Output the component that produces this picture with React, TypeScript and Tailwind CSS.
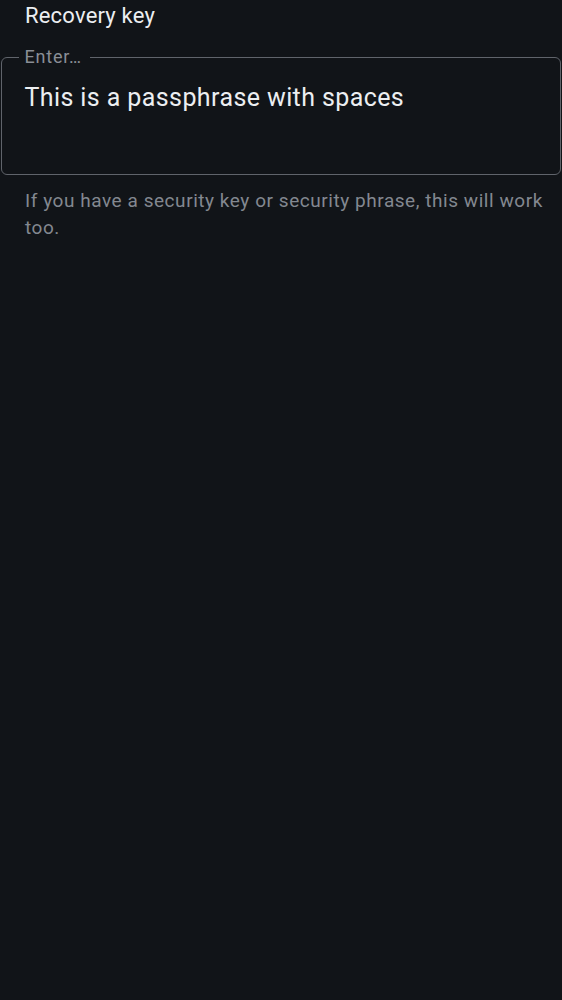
import React from "react";

export default function App() {
  return (
    <div
      className="min-h-[1000px] w-full bg-[#111418] text-[#e6e8eb]"
      style={{ fontFamily: "Roboto, 'Noto Sans', sans-serif" }}
    >
      <div className="pl-[25px] pt-[1px] text-[22px] leading-[30px] tracking-[0.2px] text-[#eceef1]">
        Recovery key
      </div>
      <fieldset className="mx-[1px] mt-[15px] h-[129px] rounded-[6px] border-[1.5px] border-[#60646b] pl-[16.5px] pr-[16px] pb-0 pt-0">
        <legend className="pl-[6px] pr-[8px] text-[18px] leading-[22px] tracking-[0.8px] text-[#8a8e96]">
          Enter…
        </legend>
        <div className="pl-[6px] pt-[14px] text-[25px] leading-[32px] tracking-[0.4px] text-[#eceef1]">
          This is a passphrase with spaces
        </div>
      </fieldset>
      <p className="pl-[25px] pr-[12px] pt-[12px] text-[19px] leading-[27px] tracking-[0.55px] text-[#838890]">
        If you have a security key or security phrase, this will work too.
      </p>
    </div>
  );
}
